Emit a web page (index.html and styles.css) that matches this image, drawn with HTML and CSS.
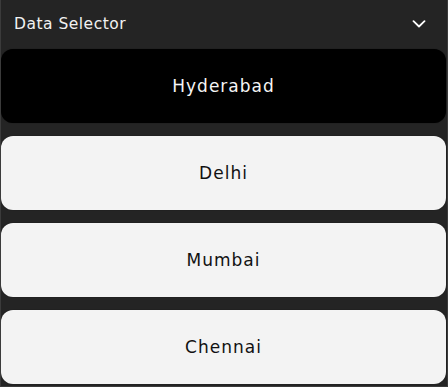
FILE: index.html
```html
<!DOCTYPE html>
<html>
<head>
<meta charset="utf-8">
<link rel="stylesheet" href="styles.css">
</head>
<body>
<div class="panel">
  <div class="header">
    <span class="title">Data Selector</span>
    <svg class="chev" width="14" height="8" viewBox="0 0 14 8"><path d="M1.5 1.2 L7 6.5 L12.5 1.2" fill="none" stroke="#ffffff" stroke-width="1.8" stroke-linecap="round" stroke-linejoin="round"/></svg>
  </div>
  <div class="list">
    <div class="item selected">Hyderabad</div>
    <div class="item">Delhi</div>
    <div class="item">Mumbai</div>
    <div class="item">Chennai</div>
  </div>
</div>
</body>
</html>
```

FILE: styles.css
```css
html, body {
  margin: 0;
  padding: 0;
  background: #242424;
}
.panel {
  width: 448px;
  height: 387px;
  box-sizing: border-box;
  border: 1px solid #3b3b3b;
  border-top: none;
  background: #242424;
  font-family: "DejaVu Sans", "Liberation Sans", sans-serif;
  overflow: hidden;
}
.header {
  height: 49px;
  display: flex;
  align-items: center;
  justify-content: space-between;
  padding: 0 21px 0 13px;
}
.title {
  color: #f2f2f2;
  font-size: 15.5px;
  letter-spacing: 0.5px;
  padding-bottom: 1px;
}
.chev {
  display: block;
  margin-bottom: 1px;
}
.list {
  display: flex;
  flex-direction: column;
  gap: 13px;
  padding-right: 1px;
}
.item {
  height: 74px;
  border-radius: 12px;
  background: #f3f3f3;
  color: #111111;
  display: flex;
  align-items: center;
  justify-content: center;
  font-size: 17px;
  letter-spacing: 1px;
  box-shadow: 0 0 1px rgba(0,0,0,0.6);
}
.item.selected {
  background: #000000;
  color: #f5f5f5;
}
```
